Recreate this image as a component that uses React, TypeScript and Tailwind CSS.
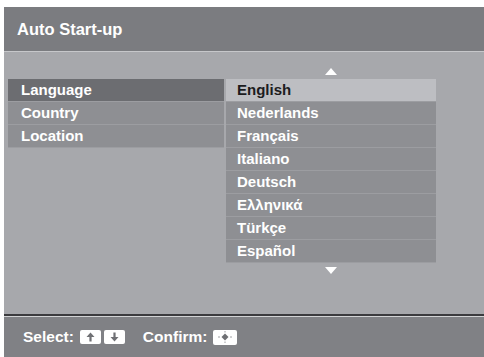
import React from 'react';

const languages = ['English', 'Nederlands', 'Français', 'Italiano', 'Deutsch', 'Ελληνικά', 'Türkçe', 'Español'];
const menu = ['Language', 'Country', 'Location'];

function KeyArrow({ dir }: { dir: 'up' | 'down' }) {
  return (
    <span className="flex h-[14px] w-[21px] items-center justify-center rounded-[2px] bg-white">
      <svg width="9" height="10" viewBox="0 0 9 10" className={dir === 'down' ? 'rotate-180' : ''}>
        <path d="M4.5 0.5 L8.5 5 L5.6 5 L5.6 9.5 L3.4 9.5 L3.4 5 L0.5 5 Z" fill="#6f7074" />
      </svg>
    </span>
  );
}

function ConfirmKey() {
  return (
    <span className="flex h-[15px] w-[24px] items-center justify-center rounded-[2px] bg-white">
      <svg width="14" height="12" viewBox="0 0 14 12">
        <path d="M7 2.5 L10.5 6 L7 9.5 L3.5 6 Z" fill="#6f7074" />
        <path d="M7 0 V1.5 M7 10.5 V12 M0 6 H2 M12 6 H14" stroke="#9fa0a4" strokeWidth="1" />
      </svg>
    </span>
  );
}

export default function App() {
  return (
    <div className="h-[357px] w-[484px] overflow-hidden bg-white pl-[4px] pt-[7px] font-['Liberation_Sans',Arial,sans-serif]">
      <div className="flex h-full flex-col">
        {/* Header */}
        <div className="flex h-[44px] items-center bg-[#7b7c80] pl-[13px]">
          <span className="text-[16.5px] font-bold text-white">Auto Start-up</span>
        </div>
        <div className="h-px bg-[#c6c7ca]" />

        {/* Body */}
        <div className="flex h-[262px] bg-[#a7a8ac] pl-[4px]">
          <div className="w-[216px] pt-[27px]">
            {menu.map((m, i) => (
              <div
                key={m}
                className={`flex h-[23px] items-center border-b border-[#9c9da1] pl-[13px] text-[15px] font-bold text-white ${
                  i === 0 ? 'bg-[#6c6d71]' : 'bg-[#8e8f93]'
                }`}
              >
                {m}
              </div>
            ))}
          </div>
          <div className="ml-[2px] flex w-[210px] flex-col">
            <div className="flex h-[27px] items-end justify-center pb-[4px]">
              <svg width="12" height="7" viewBox="0 0 12 7">
                <path d="M6 0 L12 7 L0 7 Z" fill="#ffffff" />
              </svg>
            </div>
            {languages.map((l, i) => (
              <div
                key={l}
                className={`flex h-[23px] items-center border-b border-[#9c9da1] pl-[11px] text-[15px] font-bold ${
                  i === 0 ? 'bg-[#bdbec2] text-[#1c1c1e]' : 'bg-[#8e8f93] text-white'
                }`}
              >
                {l}
              </div>
            ))}
            <div className="flex justify-center pt-[4px]">
              <svg width="12" height="7" viewBox="0 0 12 7">
                <path d="M0 0 L12 0 L6 7 Z" fill="#ffffff" />
              </svg>
            </div>
          </div>
        </div>

        {/* Footer */}
        <div className="h-[2px] bg-[#3b3b3e]" />
        <div className="h-px bg-[#d2d3d5]" />
        <div className="flex flex-1 items-center bg-[#808185] pl-[19px] text-[15.5px] font-bold text-white">
          <span>Select:</span>
          <span className="ml-[6px] flex gap-[3px]">
            <KeyArrow dir="up" />
            <KeyArrow dir="down" />
          </span>
          <span className="ml-[18px]">Confirm:</span>
          <span className="ml-[6px]">
            <ConfirmKey />
          </span>
        </div>
      </div>
    </div>
  );
}
